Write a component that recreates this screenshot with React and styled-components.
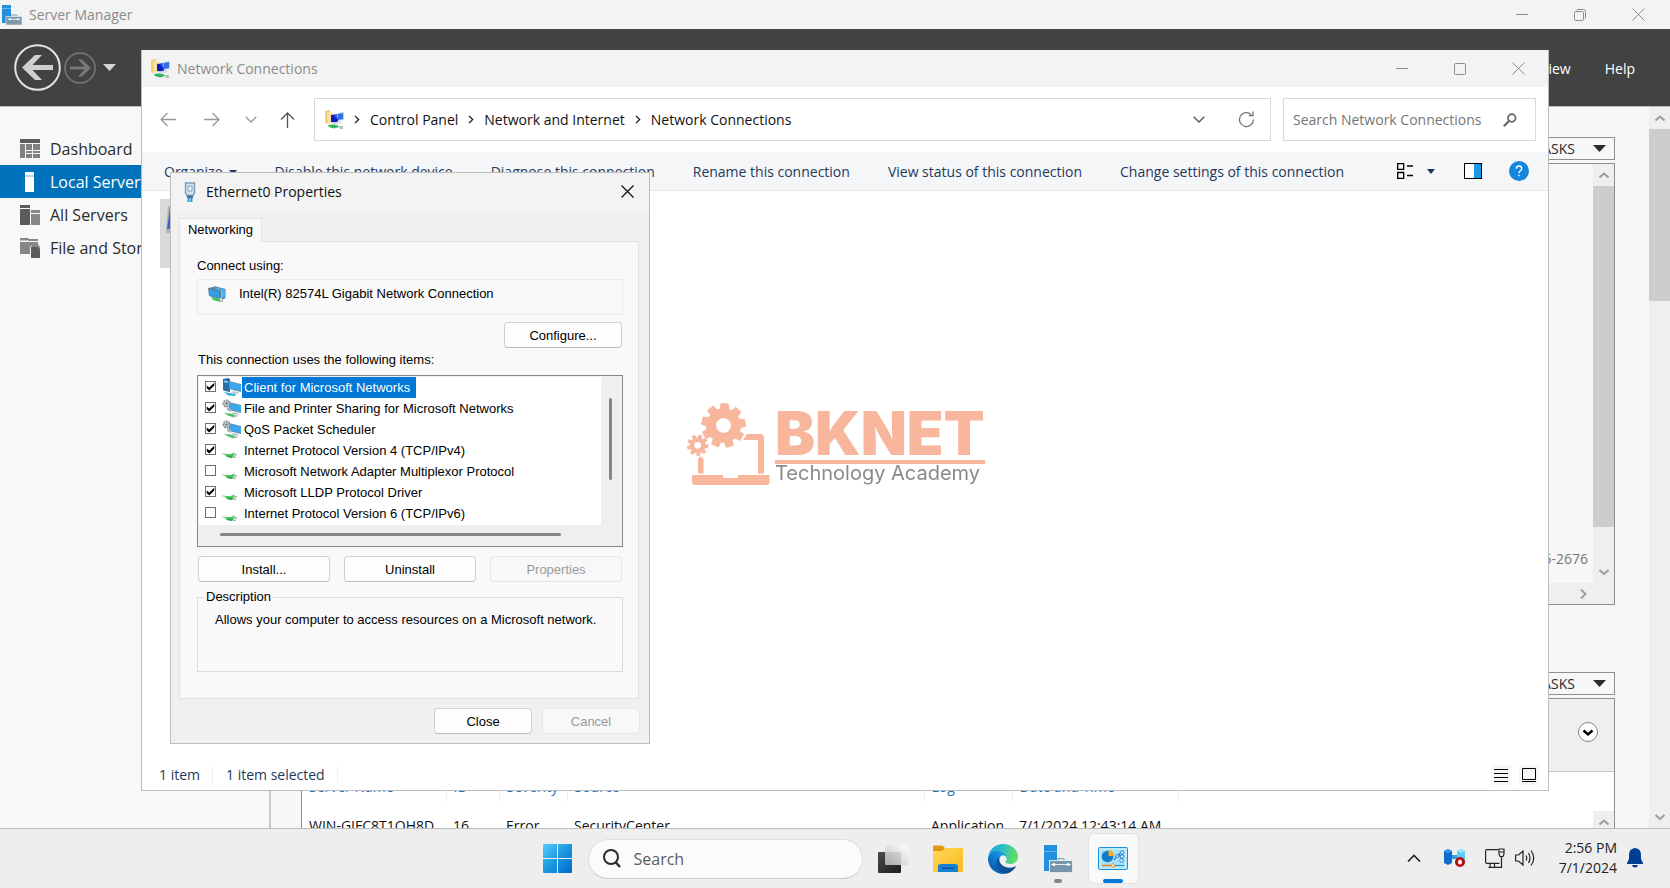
import React from "react";
import styled, { createGlobalStyle } from "styled-components";

const UI = `"Open Sans", "Noto Sans", sans-serif`;
const CLASSIC = `"Liberation Sans", Arial, sans-serif`;

const GlobalStyle = createGlobalStyle`
  *, *::before, *::after { box-sizing: border-box; }
  html, body, #root { height: 100%; }
  body { margin: 0; overflow: hidden; font-family: ${UI}; font-size: 14px; line-height: 20px; color: #111; }
  button, input { font: inherit; color: inherit; margin: 0; }
  button { border: 0; background: none; padding: 0; }
  h1, h2, p, ul { margin: 0; padding: 0; font-weight: 400; font-size: inherit; }
  ul { list-style: none; }
  a { color: inherit; text-decoration: none; }
  svg { display: block; flex: none; }
`;

/* ---------- Shell ---------- */

const Screen = styled.div`
  display: flex;
  flex-direction: column;
  height: 100vh;
  overflow: hidden;
`;

const Desktop = styled.main`
  position: relative;
  flex: 1;
  min-height: 0;
  overflow: hidden;
  display: flex;
  flex-direction: column;
`;

const TitleBar = styled.header`
  display: flex;
  align-items: center;
  flex: none;
  height: ${(p) => p.$height}px;
  padding-left: ${(p) => p.$inset}px;
  gap: ${(p) => p.$gap}px;
  background: #f3f3f3;
  color: ${(p) => (p.$active ? "#111" : "#8c8c8c")};
`;

const Title = styled.h1`
  flex: 1;
  white-space: nowrap;
`;

const CaptionButtons = styled.div`
  display: flex;
  height: 100%;
  padding-right: ${(p) => p.$after || 0}px;
`;

const CaptionButton = styled.button`
  display: flex;
  align-items: center;
  justify-content: center;
  width: ${(p) => p.$width || 58}px;
  height: 100%;
  color: inherit;
`;

/* ---------- Server Manager ---------- */

const ManagerHeader = styled.div`
  display: flex;
  align-items: center;
  flex: none;
  height: 78px;
  padding: 0 35px 0 14px;
  background: #424242;
  border-bottom: 1px solid #b9b9b9;
  color: #fff;
`;

const HistoryButtons = styled.div`
  display: flex;
  align-items: center;
  gap: 3px;
  flex: 1;
`;

const Menu = styled.nav`
  display: flex;
  gap: 34px;
  padding-top: 2px;
`;

const ManagerBody = styled.div`
  display: flex;
  flex: 1;
  min-height: 0;
  background: #f8f8f8;
`;

const Sidebar = styled.nav`
  width: 271px;
  flex: none;
  padding-top: 25px;
  border-right: 2px solid #c8c8c8;
`;

const SideLink = styled.a`
  display: flex;
  align-items: center;
  gap: 10px;
  height: 33px;
  padding-left: 20px;
  font-size: 16px;
  white-space: nowrap;
  background: ${(p) => (p.$selected ? "#0072bc" : "transparent")};
  color: ${(p) => (p.$selected ? "#fff" : "#2b2b2b")};
`;

const Dashboard = styled.div`
  flex: 1;
  min-width: 0;
  overflow: hidden;
  padding: 30px 34px 0 30px;
  background: #f7f7f7;
`;

const TaskRow = styled.div`
  display: flex;
  justify-content: flex-end;
  margin-bottom: 3px;
`;

const TaskButton = styled.button`
  display: flex;
  align-items: center;
  gap: 18px;
  height: 23px;
  padding: 0 8px;
  border: 1px solid #8f8f8f;
  color: #2b2b2b;
`;

const ServerPanel = styled.section`
  display: grid;
  grid-template-columns: 1fr 21px;
  grid-template-rows: 1fr 21px;
  height: 442px;
  margin-bottom: 67px;
  border: 1px solid #8f8f8f;
`;

const ServerFacts = styled.div`
  display: flex;
  align-items: flex-end;
  justify-content: flex-end;
  padding: 0 5px 14px;
  color: #777;
`;

const ScrollBar = styled.div`
  display: flex;
  flex-direction: ${(p) => (p.$horizontal ? "row" : "column")};
  justify-content: ${(p) => (p.$horizontal ? "flex-end" : "flex-start")};
  width: ${(p) => (p.$horizontal ? "auto" : "21px")};
  flex: none;
  background: #efefef;
`;

const ScrollButton = styled.button`
  display: flex;
  align-items: center;
  justify-content: center;
  width: 21px;
  height: 22px;
  flex: none;
  color: #9d9d9d;
`;

const ScrollThumb = styled.div`
  height: ${(p) => p.$length}px;
  background: #cdcdcd;
`;

const Spacer = styled.div`
  flex: 1;
`;

const EventPanel = styled.section`
  border: 1px solid #8f8f8f;
  background: #fff;
`;

const EventHeader = styled.div`
  display: flex;
  align-items: center;
  justify-content: flex-end;
  height: 73px;
  padding-right: 16px;
  padding-bottom: 6px;
  background: #efefef;
  border-bottom: 1px solid #c4c4c4;
`;

const EventBody = styled.div`
  display: flex;
`;

const EventTableBox = styled.div`
  flex: 1;
  min-width: 0;
`;

const EventScroll = styled.div`
  align-self: stretch;
  padding-top: 39px;
`;

const EventScrollTrack = styled.div`
  background: #efefef;
  height: 100%;
`;

const EventTable = styled.table`
  border-collapse: collapse;
  table-layout: fixed;
  width: 876px;
  text-align: left;
  white-space: nowrap;
  th, td { padding: 0 0 0 7px; font-weight: 400; }
  th { height: 29px; color: #1e72b8; border-right: 1px solid #eee; }
  td { height: 50px; color: #111; }
`;

/* ---------- Network Connections ---------- */

const ExplorerWindow = styled.section`
  position: absolute;
  inset: 50px 121px 37px 141px;
  display: flex;
  flex-direction: column;
  background: #fff;
  border: 1px solid #bcbcbc;
  border-top: 0;
`;

const NavRow = styled.div`
  display: flex;
  align-items: center;
  flex: none;
  height: 65px;
  padding-right: 12px;
`;

const NavButton = styled.button`
  display: flex;
  align-items: center;
  justify-content: center;
  width: ${(p) => p.$width}px;
  height: 32px;
  color: ${(p) => (p.$dim ? "#999" : "#555")};
`;

const NavButtons = styled.div`
  display: flex;
  align-items: center;
  width: 172px;
  padding-left: 4px;
  flex: none;
`;

const AddressBar = styled.div`
  display: flex;
  align-items: center;
  flex: 1;
  height: 43px;
  padding-left: 10px;
  border: 1px solid #d9d9d9;
`;

const Crumbs = styled.nav`
  display: flex;
  align-items: center;
  flex: 1;
  padding-left: 9px;
  gap: 10px;
  white-space: nowrap;
`;

const SearchField = styled.label`
  display: flex;
  align-items: center;
  width: 253px;
  height: 43px;
  margin-left: 12px;
  padding: 0 18px 0 9px;
  border: 1px solid #d9d9d9;
`;

const BareInput = styled.input`
  flex: 1;
  min-width: 0;
  border: 0;
  padding: 0;
  background: none;
  outline: none;
  color: #333;
  &::placeholder { color: ${(p) => p.$hint || "#767676"}; opacity: 1; }
`;

const CommandBar = styled.div`
  display: flex;
  align-items: center;
  flex: none;
  height: 39px;
  padding: 0 19px 0 22px;
  background: #f5f6f8;
  border-bottom: 1px solid #e3e6ea;
  color: #1e395b;
`;

const Commands = styled.div`
  display: flex;
  flex: 1;
  gap: 38px;
  padding-top: 2px;
`;

const Command = styled.button`
  display: flex;
  align-items: center;
  gap: 6px;
  white-space: nowrap;
`;

const ViewTools = styled.div`
  display: flex;
  align-items: center;
`;

const ToolButton = styled.button`
  display: flex;
  align-items: center;
  margin-left: ${(p) => p.$before || 0}px;
`;

const FileArea = styled.div`
  flex: 1;
  padding: 8px 0 0 18px;
`;

const ConnectionTile = styled.div`
  display: flex;
  width: 320px;
  height: 69px;
  padding: 6px;
  background: #d9d9d9;
`;

const StatusBar = styled.footer`
  display: flex;
  align-items: center;
  flex: none;
  height: 30px;
  padding: 0 9px 0 17px;
  color: #1e395b;
`;

const StatusItem = styled.span`
  padding-right: 12px;
  margin-right: 13px;
  border-right: 1px solid #eee;
  line-height: 16px;
`;

const StatusTools = styled.div`
  display: flex;
  gap: 8px;
  margin-left: auto;
`;

const StatusButton = styled.button`
  display: flex;
  align-items: center;
  justify-content: center;
  width: 20px;
  height: 20px;
  background: #f6f6f6;
  color: #000;
`;

/* ---------- Ethernet0 Properties ---------- */

const Dialog = styled.section`
  position: absolute;
  top: 172px;
  left: 170px;
  width: 480px;
  background: #f0f0f0;
  border: 1px solid #bdbdbd;
`;

const DialogBody = styled.div`
  padding: 8px 9px 9px 8px;
  font-family: ${CLASSIC};
  font-size: 13px;
  line-height: 16px;
  color: #000;
`;

const Tab = styled.button`
  display: block;
  height: 24px;
  width: 83px;
  margin-bottom: -1px;
  padding-bottom: 2px;
  position: relative;
  background: #f9f9f9;
  border: 1px solid #e2e2e2;
  border-bottom: 0;
`;

const TabPanel = styled.div`
  display: flex;
  flex-direction: column;
  height: 458px;
  margin-right: 1px;
  padding: 16px 15px 0 17px;
  background: #f9f9f9;
  border: 1px solid #e2e2e2;
`;

const AdapterBox = styled.div`
  display: flex;
  gap: 13px;
  height: 36px;
  margin: 5px 0 7px;
  padding: 6px 10px;
  border: 1px solid #ececec;
`;

const ButtonRow = styled.div`
  display: flex;
  justify-content: flex-end;
  gap: 14px;
  padding: 0 1px;
`;

const PushButton = styled.button`
  width: ${(p) => p.$width}px;
  height: 26px;
  padding-top: 1px;
  border: 1px solid #d0d0d0;
  border-bottom-color: #bbb;
  border-radius: 4px;
  background: #fdfdfd;
  &:disabled { color: #9a9a9a; background: #f8f8f8; border-color: #e6e6e6; }
`;

const AboveList = styled.p`
  margin-top: 4px;
  padding-left: 1px;
`;

const ItemList = styled.div`
  display: grid;
  grid-template-columns: 1fr 20px;
  grid-template-rows: 148px 20px;
  height: 172px;
  margin: 7px 0 9px;
  padding: 1px;
  border: 1px solid #828790;
  background: #efefef;
`;

const Items = styled.ul`
  background: #fff;
`;

const Item = styled.li`
  display: flex;
  align-items: center;
  height: 21px;
  padding-left: 6px;
`;

const ItemLabel = styled.label`
  display: flex;
  align-items: center;
  gap: 1px;
  margin-left: 6px;
  height: 21px;
`;

const ItemText = styled.span`
  padding: 3px 6px 2px 2px;
  background: ${(p) => (p.$selected ? "#0078d7" : "transparent")};
  color: ${(p) => (p.$selected ? "#fff" : "#000")};
`;

const Check = styled.input`
  appearance: none;
  width: 11px;
  height: 11px;
  margin: 0 0 2px;
  border: 1px solid #6e6e6e;
  background: #fff;
  &:checked::after {
    content: "";
    display: block;
    width: 9px;
    height: 9px;
    background: #000;
    clip-path: polygon(8% 38%, 36% 62%, 92% 8%, 92% 40%, 36% 94%, 8% 70%);
  }
`;

const VerticalTrack = styled.div`
  padding: 21px 0 0 8px;
`;

const HorizontalTrack = styled.div`
  grid-column: 1 / -1;
  padding: 8px 60px 0 21px;
`;

const SlimThumb = styled.div`
  border-radius: 2px;
  background: #868686;
  width: ${(p) => (p.$vertical ? "3px" : "auto")};
  height: ${(p) => (p.$vertical ? "82px" : "3px")};
`;

const Description = styled.fieldset`
  height: 83px;
  margin: 7px 0 0;
  padding: 7px 0 0 17px;
  border: 1px solid #dcdcdc;
  white-space: nowrap;
  legend { margin-left: -11px; padding: 0 2px; }
`;

const DialogActions = styled.div`
  display: flex;
  justify-content: flex-end;
  gap: 10px;
  margin-top: 9px;
`;

/* ---------- Watermark ---------- */

const Watermark = styled.div`
  position: fixed;
  inset: 0;
  display: flex;
  align-items: center;
  justify-content: center;
  gap: 4px;
  padding-left: 2px;
  pointer-events: none;
`;

const WatermarkText = styled.div`
  width: 210px;
  white-space: nowrap;
  font-family: Inter, sans-serif;
`;

const BrandName = styled.div`
  height: 62px;
  padding-top: 4px;
  border-bottom: 4px solid #f8b69d;
  color: #f8b69d;
  font-size: 60px;
  font-weight: 900;
  line-height: 54px;
`;

const BrandLine = styled.div`
  height: 22px;
  color: #8a8a8a;
  font-size: 20px;
  line-height: 18px;
`;

/* ---------- Taskbar ---------- */

const Taskbar = styled.footer`
  display: grid;
  grid-template-columns: 1fr auto 1fr;
  align-items: center;
  flex: none;
  height: 60px;
  background: #eee;
  border-top: 1px solid #bdbdbd;
`;

const AppGroup = styled.div`
  grid-column: 2;
  display: flex;
  align-items: center;
  gap: 6px;
`;

const AppButton = styled.button`
  position: relative;
  display: flex;
  align-items: center;
  justify-content: center;
  width: 49px;
  height: 49px;
  border-radius: 5px;
  background: ${(p) => (p.$active ? "#f9f9f9" : "transparent")};
  box-shadow: ${(p) => (p.$active ? "0 0 0 1px #e2e2e2" : "none")};
  &::after {
    content: "";
    position: absolute;
    bottom: 0;
    display: ${(p) => (p.$running ? "block" : "none")};
    width: ${(p) => (p.$active ? 20 : 8)}px;
    height: 4px;
    border-radius: 2px;
    background: ${(p) => (p.$active ? "#0078d7" : "#868686")};
  }
`;

const TaskSearch = styled.label`
  display: flex;
  align-items: center;
  gap: 13px;
  width: 275px;
  height: 40px;
  padding: 0 14px;
  border: 1px solid #dedede;
  border-bottom-color: #ccc;
  border-radius: 20px;
  background: #fbfbfb;
  font-size: 16px;
`;

const Tray = styled.div`
  display: flex;
  align-items: center;
  justify-content: flex-end;
  padding: 0 27px 2px 0;
  color: #222;
`;

const TrayButton = styled.button`
  display: flex;
  margin-right: ${(p) => p.$after}px;
`;

const Clock = styled.time`
  width: 62px;
  margin-right: 10px;
  text-align: right;
`;

/* ---------- Icons ---------- */

const Line = ({ w, h, d, sw = 1 }) => (
  <svg width={w} height={h} viewBox={`0 0 ${w} ${h}`} fill="none" stroke="currentColor" strokeWidth={sw} aria-hidden="true">
    <path d={d} />
  </svg>
);

const Minimize = () => <Line w={12} h={12} d="M0 5.5H12" />;
const Maximize = () => (
  <svg width="12" height="12" fill="none" stroke="currentColor"><rect x=".5" y=".5" width="11" height="11" rx="1" /></svg>
);
const Restore = () => (
  <svg width="12" height="12" fill="none" stroke="currentColor">
    <rect x=".5" y="2.5" width="9" height="9" rx="1" />
    <path d="M2.5 1.5Q3 .5 4 .5H9.5Q11.5 .5 11.5 2.5V8Q11.5 9 10.5 9.5" />
  </svg>
);
const Cross = ({ sw }) => <Line w={13} h={13} d="M.5 .5L12.5 12.5M12.5 .5L.5 12.5" sw={sw} />;
const ChevDown = ({ sw = 1.3 }) => <Line w={12} h={7} d="M.7 .7L6 6L11.3 .7" sw={sw} />;
const CrumbArrow = () => <Line w={6} h={9} d="M1 .8L4.700 4.500L1 8.200" sw={1.2} />;
const ScrollChev = ({ d }) => <Line w={10} h={10} d={d} sw={2} />;
const UP = "M.5 7.5L5 3.500L9.500 7.500";
const DOWN = "M.5 3L5 7L9.500 3";
const RIGHT = "M3 .5L7.500 5L3 9.500";
const Triangle = ({ w = 8, h = 5, fill = "currentColor" }) => (
  <svg width={w} height={h} fill={fill}><path d={`M0 0H${w}L${w / 2} ${h}Z`} /></svg>
);

const ServerIcon = ({ size = 20, box = "#7b98ad" }) => (
  <svg width={size} height={size} viewBox="0 0 20 20">
    <path d="M0 0H9V18H0Z" fill="#2290dc" />
    <path d="M0 3.5H9" stroke="#7cc0ec" strokeWidth=".8" />
    <path d="M9 10.8Q9 10 10 10H14Q15 10 15 10.8V12" fill="none" stroke={box} />
    <rect x="4" y="11.5" width="16" height="8.500" fill={box} stroke="#eee" strokeWidth=".6" />
    <path d="M6 14.3H18" stroke="#e9f1f6" />
    <circle cx="8" cy="14.3" r="1" fill="#fff" /><circle cx="16" cy="14.3" r="1" fill="#fff" />
  </svg>
);

const DashboardIcon = () => (
  <svg width="20" height="19"><path fill="#5b5b5b" d="M0 0H20V4H0Z" /><path fill="#808080" d="M0 5H5V19H0ZM6 5H12V11H6ZM13 5H20V11H13ZM6 12H12V14H6ZM13 12H20V14H13ZM6 15H12V19H6ZM13 15H20V19H13Z" /></svg>
);
const LocalIcon = () => (
  <svg width="20" height="20"><path fill="#fff" d="M5 0H14V3H5ZM5 5H14V20H5Z" /><path fill="#b5d7ee" d="M5 3H14V5H5Z" /></svg>
);
const ServersIcon = () => (
  <svg width="20" height="20"><path fill="#5b5b5b" d="M0 0H10V3H0ZM0 4H10V20H0Z" /><path fill="#868686" d="M11 5H20V8H11ZM11 9H20V20H11Z" /></svg>
);
const StorageIcon = () => (
  <svg width="20" height="20"><path fill="#868686" d="M0 0H8L9 1H18V3H9L8 2.500H0ZM0 4H18V7H13Q10 7 10 11V16H0Z" /><path fill="#5b5b5b" d="M12 9H16V8Q20 8 20 12L18 11H20V20H11V9Z" /><path fill="#868686" d="M11 9Q12 6 16 6Q20 6 20 11Q18 9 15 9Z" /></svg>
);

const BackCircle = () => (
  <svg width="47" height="47" viewBox="0 0 47 47">
    <circle cx="23.5" cy="23.5" r="22.3" fill="none" stroke="#e4e4e4" strokeWidth="2" />
    <path d="M8 23.5L21 11H28L18.5 21H39V26H18.5L28 36H21Z" fill="#cfcfcf" />
  </svg>
);
const ForwardCircle = () => (
  <svg width="32" height="32" viewBox="0 0 32 32">
    <circle cx="16" cy="16" r="15" fill="none" stroke="#6e6e6e" strokeWidth="2" />
    <path d="M27 16L18 7.5H14L20.5 14.5H6V17.5H20.5L14 24.5H18Z" fill="#777" />
  </svg>
);

const NetFolderIcon = () => (
  <svg width="20" height="20" viewBox="0 0 20 20">
    <path d="M0 1L5 0V12L2 14L0 12Z" fill="#f2cf6a" />
    <path d="M2 2L8 3V12L3 14Z" fill="#fae3a0" />
    <path d="M6 5L13 4V13L6 12Z" fill="#0b1fc2" /><path d="M9 6L13 4V9Z" fill="#3b62f0" />
    <path d="M12 3L19 2V10L13 11Z" fill="#b4d9f2" /><path d="M13 4L18 3V9L13 10Z" fill="#2f6fe0" />
    <path d="M7 13L15 11L17 13L9 15Z" fill="#d3dde6" />
    <path d="M3 15L8 14.5L13 15.500L14 17L9 18.500L4 17Z" fill="#2fb457" /><path d="M13 16H18V19H15Z" fill="#b5c0b8" />
  </svg>
);

const EthernetIcon = () => (
  <svg width="12" height="20" viewBox="0 0 12 20">
    <path d="M1.5 1H10.5V11L9 13.5H3L1.5 11Z" fill="#d2e4f1" stroke="#7e9db5" strokeWidth="1.4" />
    <path d="M4 4H8V9H4Z" fill="#f3f9fd" stroke="#7e9db5" />
    <path d="M3 13.5H9V16H3Z" fill="#50748f" /><path d="M3.5 16H8.5V20H3.500Z" fill="#2ba0e0" /><path d="M5.5 16H6.500V20H5.500Z" fill="#b9e2f7" />
  </svg>
);

const AdapterIcon = () => (
  <svg width="18" height="17" viewBox="0 0 18 17">
    <path d="M0 2L5 1L13 3V12L11 13L1 10Z" fill="#647f91" />
    <path d="M1 3L11 5.500V12L1 9.500Z" fill="#2f9fe8" />
    <path d="M6 0L17.500 3V12L15 13.500L13.500 13V5L6 3Z" fill="#5c7d93" /><path d="M7 1L17 3.700V11.500L14 12V5L7 3Z" fill="#45b2f2" />
    <path d="M3 11L9 12L13 14L12 16L5 14Z" fill="#45c262" /><path d="M12 14H15V16H12Z" fill="#b7c2bb" />
  </svg>
);

const Monitor = () => (
  <>
    <path d="M7 3L19 6V14L7 11Z" fill="#6e8898" /><path d="M8 4L19 6.8V13L8 10.500Z" fill="#3ba8ee" />
    <path d="M11 13L16 14L17 16L9 14.500Z" fill="#b8c8d2" />
  </>
);
const ClientIcon = () => (
  <svg width="19" height="19" viewBox="0 0 19 19">
    <path d="M1 1L6 0L8 1V14L3 13L1 12Z" fill="#286fa3" /><path d="M2 2.5L6 3V5L2 4.500Z" fill="#7cc4ee" />
    <Monitor />
    <path d="M2 14L8 15L14 16L13 18L6 17.500Z" fill="#37afd2" />
  </svg>
);
const ServiceIcon = () => (
  <svg width="19" height="19" viewBox="0 0 19 19">
    <Monitor />
    <circle cx="4.5" cy="4.500" r="3" fill="#e4e7e9" stroke="#8b959b" strokeWidth="2" strokeDasharray="2 .6" />
    <circle cx="4.5" cy="4.500" r="1.300" fill="#6f777c" /><path d="M5 8L9 10V13L5 11Z" fill="#aab4ba" />
    <path d="M2 14L8 14.5L14 16L12 18.500L6 16.500Z" fill="#44c366" /><path d="M12 16H15V18H12Z" fill="#b2bdb5" />
  </svg>
);
const ProtocolIcon = () => (
  <svg width="19" height="19" viewBox="0 0 19 19">
    <path d="M0 12L4 12.5L3 14L0 13.500Z" fill="#cfd6d0" />
    <path d="M2 13L9 13L12 11.5L13 13L10 17L5 16Z" fill="#4fce66" /><path d="M5 14.5L11 14.500L10 17L5 16Z" fill="#2da94b" />
    <path d="M11 13H15V14.5H11ZM11 15.500H14V17H11Z" fill="#aab3ac" />
  </svg>
);
const ConnectionIcon = () => (
  <svg width="48" height="30"><path d="M2 1L30 0V28H0Z" fill="#a8b4bf" /><path d="M4 3H30V22L1 24Z" fill="#2f63d4" /></svg>
);

const ViewIcon = () => (
  <svg width="16" height="16" fill="none" stroke="#000" strokeWidth="1.3"><path d="M.7 .7H6.700V6.300H.7ZM.7 9.500H6.700V15.300H.7ZM10 3H16M10 12.500H16" /></svg>
);
const PaneIcon = () => (
  <svg width="18" height="16"><rect x=".5" y=".5" width="17" height="15" fill="#fff" stroke="#000" /><path d="M10 1H17V15H10Z" fill="#1a9ae6" /></svg>
);
const HelpIcon = () => (
  <svg width="20" height="20"><circle cx="10" cy="10" r="10" fill="#1486dc" /><path d="M7.3 7.700Q7.300 5 10 5Q12.700 5 12.700 7.500Q12.700 9 11.200 10Q10 10.800 10 12.300M10 13.700V15.300" fill="none" stroke="#fff" strokeWidth="1.400" /></svg>
);
const RefreshIcon = () => (
  <svg width="17" height="17" viewBox="0 0 17 17" fill="none" stroke="#777" strokeWidth="1.3"><path d="M15.5 8.500A7 7 0 1 1 13 3.200M15 .5V4.500H10.800" /></svg>
);
const FindIcon = () => (
  <svg width="14" height="14" viewBox="0 0 14 14" fill="none" stroke="#666"><circle cx="8.8" cy="5" r="3.800" strokeWidth="1.700" /><path d="M6.2 7.800L.8 13.200" strokeWidth="2.200" /></svg>
);
const DetailsIcon = () => <Line w={14} h={14} d="M0 1.5H14M0 5.5H14M0 9.5H14M0 13.500H14" />;
const LargeIcon = () => <Line w={14} h={14} d="M.5 .5H13.5V11.5H.5ZM0 13.5H14" />;

const ExpandIcon = () => (
  <svg width="20" height="20"><circle cx="10" cy="10" r="9.5" fill="#fff" stroke="#888" /><path d="M5.5 8.500L10 12.500L14.500 8.500" fill="none" stroke="#000" strokeWidth="2.400" /></svg>
);

const StartIcon = () => (
  <svg width="29" height="29"><defs><linearGradient id="win" x1="0" y1="0" x2="29" y2="29" gradientUnits="userSpaceOnUse"><stop stopColor="#55cdfb" /><stop offset=".5" stopColor="#1b97e0" /><stop offset="1" stopColor="#0068cf" /></linearGradient></defs>
    <path fill="url(#win)" d="M1 0H14V14H0V1Q0 0 1 0ZM15 0H28Q29 0 29 1V14H15ZM0 15H14V29H1Q0 29 0 28ZM15 15H29V28Q29 29 28 29H15Z" /></svg>
);
const LensIcon = () => (
  <svg width="18" height="19" fill="none" stroke="#2b2b2b"><circle cx="8" cy="8" r="7" strokeWidth="2" /><path d="M12.5 13L17 18" strokeWidth="2.500" /></svg>
);
const TaskViewIcon = () => (
  <svg width="30" height="28"><defs><linearGradient id="tv" x1="0" y1="0" x2="1" y2="1"><stop stopColor="#4a4a4a" /><stop offset="1" stopColor="#1d1d1d" /></linearGradient><linearGradient id="tw" x1="0" y1="1" x2="1" y2="0"><stop stopColor="#bdbdbd" /><stop offset="1" stopColor="#fff" /></linearGradient></defs>
    <rect y="7" width="23" height="21" rx="1" fill="url(#tv)" /><rect x="7" y="0" width="23" height="20" rx="1" fill="url(#tw)" fillOpacity=".88" /></svg>
);
const FolderIcon = () => (
  <svg width="30" height="28"><defs><linearGradient id="fo" x1="0" y1="0" x2="1" y2="1"><stop stopColor="#ffd75b" /><stop offset="1" stopColor="#f9b91f" /></linearGradient></defs>
    <path d="M0 1.5Q0 .5 1 .5H9Q10 .5 11 2L12 3V9H0Z" fill="#e29a0d" /><path d="M0 6H9L12 3H29Q30 3 30 4V26Q30 27 29 27H1Q0 27 0 26Z" fill="url(#fo)" />
    <path d="M5 27V22Q5 19 8 19H22Q25 19 25 22V27Z" fill="#1680d2" /><path d="M9 22.5H21V24H9Z" fill="#0b549b" /></svg>
);
const EdgeIcon = () => (
  <svg width="30" height="30" viewBox="0 0 256 256"><defs>
    <linearGradient id="e1" x1="63" y1="178" x2="241" y2="178" gradientUnits="userSpaceOnUse"><stop stopColor="#0c59a4" /><stop offset="1" stopColor="#114a8b" /></linearGradient>
    <linearGradient id="e2" x1="157" y1="99" x2="46" y2="221" gradientUnits="userSpaceOnUse"><stop stopColor="#1b9de2" /><stop offset=".5" stopColor="#0e7fd0" /><stop offset="1" stopColor="#0560b5" /></linearGradient>
    <linearGradient id="e3" x1="20" y1="60" x2="255" y2="120" gradientUnits="userSpaceOnUse"><stop stopColor="#1ca5da" /><stop offset=".45" stopColor="#2fc2c0" /><stop offset="1" stopColor="#66e055" /></linearGradient></defs>
    <g transform="translate(-4.6 -4.9)">
      <path fill="url(#e1)" d="M235.68 195.46a93.73 93.73 0 0 1-10.54 4.71 101.87 101.87 0 0 1-35.9 6.46c-47.32 0-88.54-32.55-88.54-74.32A31.48 31.48 0 0 1 117.13 105c-42.8 1.8-53.8 46.4-53.8 72.53 0 73.88 68.09 81.37 82.76 81.37 7.91 0 19.84-2.3 27-4.56l1.31-.44a128.34 128.34 0 0 0 66.6-52.8 4 4 0 0 0-5.32-5.64Z" />
      <path fill="url(#e2)" d="M110.34 246.34A79.2 79.2 0 0 1 87.6 225a80.72 80.72 0 0 1 29.53-120c3.12-1.47 8.45-4.13 15.54-4a32.35 32.35 0 0 1 25.69 13 31.88 31.88 0 0 1 6.36 18.66c0-.21 24.46-79.6-80-79.6-43.9 0-80 41.66-80 78.21a130.15 130.15 0 0 0 12.11 56 128 128 0 0 0 156.38 67.11 75.55 75.55 0 0 1-62.78-8Z" />
      <path fill="url(#e3)" d="M156.94 153.78c-.81 1.05-3.3 2.5-3.3 5.66 0 2.61 1.7 5.12 4.72 7.23 14.38 10 41.49 8.68 41.56 8.68a59.56 59.56 0 0 0 30.27-8.35 61.38 61.38 0 0 0 30.43-52.88c.26-22.41-8-37.31-11.34-43.91C228.09 28.76 182.35 4.7 132.61 4.7a128 128 0 0 0-128 126.2c.48-36.54 36.8-66.05 80-66.05 3.5 0 23.46.34 42 10.07 16.34 8.58 24.9 18.94 30.85 29.21 6.18 10.67 7.28 24.15 7.28 29.52s-2.74 13.33-7.8 20.13Z" />
    </g></svg>
);
const ManagerAppIcon = () => (
  <svg width="29" height="28"><path d="M0 0H13V26H0Z" fill="#2290dc" /><path d="M0 6.5H13" stroke="#5fb2ea" />
    <path d="M14 16V14.5Q14 13.500 15 13.500H19Q20 13.500 20 14.500V16" fill="none" stroke="#7b9aaf" strokeWidth="1.200" />
    <rect x="5.5" y="15.500" width="23" height="12" fill="#7495aa" stroke="#dfe7ec" /><path d="M7 19.500H27" stroke="#e6eef3" /><circle cx="10" cy="19.500" r="1.500" fill="#fff" /><circle cx="24" cy="19.500" r="1.500" fill="#fff" /></svg>
);
const ControlPanelIcon = () => (
  <svg width="30" height="24"><rect x=".5" y=".5" width="29" height="22" rx="1" fill="#a4e2fb" stroke="#1b8fd8" /><path d="M2 2H28V21H2Z" fill="none" stroke="#d5f3fe" />
    <circle cx="9.5" cy="9.500" r="5.800" fill="#137ac9" /><path d="M10.500 3V9H16.500A6 6 0 0 0 10.500 3Z" fill="#f7a928" />
    <path d="M16 13L20 8L24 10M20 8L24 5" stroke="#1677bf" fill="none" strokeWidth="1.200" /><g fill="#fff" stroke="#1677bf"><circle cx="19.500" cy="9" r="1.500" /><circle cx="24" cy="5.500" r="1.700" /><circle cx="24" cy="9.500" r="1.700" /><circle cx="23.500" cy="13.500" r="1.700" /></g>
    <path d="M4 18.500H26" stroke="#1b8fd8" /><path d="M4 18.500H15" stroke="#e58a1c" strokeWidth="1.500" /><circle cx="15" cy="18.500" r="1.700" fill="#fff" stroke="#e58a1c" /></svg>
);
const ServicesTrayIcon = () => (
  <svg width="22" height="18"><path d="M0 2L4 0L8 2V14L4 16L0 14Z" fill="#0f6ccb" /><path d="M0 2L4 0L8 2L4 4Z" fill="#3c99ea" /><path d="M13 2L17 0L21 2V14L17 16L13 14Z" fill="#59cff6" /><path d="M13 2L17 0L21 2L17 4Z" fill="#9be8fd" />
    <path d="M8 6H13V10H8Z" fill="#329fe6" /><circle cx="16" cy="13" r="5" fill="#b30f14" /><ellipse cx="16" cy="13" rx="2" ry="2.600" fill="#fff" /></svg>
);
const NetworkTrayIcon = () => (
  <svg width="20" height="20" fill="none" stroke="#222" strokeWidth="1.2"><path d="M13 1.600H2Q.6 1.600 .6 3V14Q.6 15.400 2 15.400H14.500M5 15.400V19M9.500 15.400V19M3.500 19.300H16.500V9M14 1H19V6L18 8.500H15L14 6ZM14 4H19" /></svg>
);
const SoundIcon = () => (
  <svg width="20" height="18" viewBox="0 0 20 18" fill="none" stroke="#222" strokeWidth="1.2"><path d="M.6 6V12H3.500L8 16V2L3.500 6ZM11 6.500Q12.500 9 11 11.500M13.500 4Q16.500 9 13.500 14M16 1.500Q21.500 9 16 16.500" /></svg>
);
const BellIcon = () => (
  <svg width="16" height="20"><path d="M8 0Q14 .5 14 7V11L16 15V16H0V15L2 11V7Q2 .5 8 0Z" fill="#003e92" /><path d="M5 17H11Q10.500 19.500 8 19.500Q5.500 19.500 5 17Z" fill="#003e92" /></svg>
);

const gearPath = (cx, cy, outer, inner, hole, teeth, turn) => {
  const step = (Math.PI * 2) / teeth;
  const at = (r, a) => `${(cx + r * Math.cos(a)).toFixed(2)} ${(cy + r * Math.sin(a)).toFixed(2)}`;
  const points = [];
  for (let i = 0; i < teeth; i += 1) {
    const a = turn + i * step;
    points.push(at(inner, a - step * 0.34), at(outer, a - step * 0.24), at(outer, a + step * 0.24), at(inner, a + step * 0.34));
  }
  return `M${points.join("L")}ZM${cx - hole} ${cy}a${hole} ${hole} 0 1 0 ${hole * 2} 0a${hole} ${hole} 0 1 0 ${-hole * 2} 0Z`;
};
const BrandMark = () => (
  <svg width="84" height="84" viewBox="17 12 84 84" fill="#f8b69d" fillRule="evenodd">
    <path d={gearPath(53.5, 35.5, 22, 17, 7.8, 9, -0.12)} stroke="#f8b69d" strokeLinejoin="round" />
    <path d={gearPath(27.7, 55.3, 10.8, 8, 3.4, 9, 0.1)} />
    <path d="M73 50L77 44H90Q94 44 94 48V83.5H88V50ZM28 69L30.5 66L33.5 69V83.5H28ZM22 85H53V88H68V85H99.5V92Q99.5 95 96.5 95H25Q22 95 22 92Z" />
  </svg>
);

/* ---------- Data ---------- */

const PLACES = [
  ["Dashboard", DashboardIcon],
  ["Local Server", LocalIcon],
  ["All Servers", ServersIcon],
  ["File and Storage Services", StorageIcon],
];

const COMMANDS = [
  "Disable this network device",
  "Diagnose this connection",
  "Rename this connection",
  "View status of this connection",
  "Change settings of this connection",
];

const ITEMS = [
  ["Client for Microsoft Networks", true, ClientIcon],
  ["File and Printer Sharing for Microsoft Networks", true, ServiceIcon],
  ["QoS Packet Scheduler", true, ServiceIcon],
  ["Internet Protocol Version 4 (TCP/IPv4)", true, ProtocolIcon],
  ["Microsoft Network Adapter Multiplexor Protocol", false, ProtocolIcon],
  ["Microsoft LLDP Protocol Driver", true, ProtocolIcon],
  ["Internet Protocol Version 6 (TCP/IPv6)", false, ProtocolIcon],
];

const COLUMNS = [["Server Name", 144], ["ID", 53], ["Severity", 68], ["Source", 357], ["Log", 88], ["Date and Time", 166]];
const EVENT = ["WIN-GIFC8T1OH8D", "16", "Error", "SecurityCenter", "Application", "7/1/2024 12:43:14 AM"];

/* ---------- Parts ---------- */

function Tasks() {
  return (
    <TaskRow>
      <TaskButton>TASKS<Triangle w={13} h={7} /></TaskButton>
    </TaskRow>
  );
}

function ServerManager() {
  return (
    <>
      <TitleBar $height={29} $inset={2} $gap={7}>
        <ServerIcon />
        <Title>Server Manager</Title>
        <CaptionButtons $after={3}>
          <CaptionButton aria-label="Minimize"><Minimize /></CaptionButton>
          <CaptionButton aria-label="Restore"><Restore /></CaptionButton>
          <CaptionButton aria-label="Close"><Cross /></CaptionButton>
        </CaptionButtons>
      </TitleBar>
      <ManagerHeader>
        <HistoryButtons>
          <button aria-label="Back"><BackCircle /></button>
          <button aria-label="Forward"><ForwardCircle /></button>
          <CaptionButton $width={21} aria-label="History"><Triangle w={13} h={7} fill="#d6d6d6" /></CaptionButton>
        </HistoryButtons>
        <Menu>
          <button>View</button>
          <button>Help</button>
        </Menu>
      </ManagerHeader>
      <ManagerBody>
        <Sidebar>
          {PLACES.map(([name, Icon]) => (
            <SideLink key={name} href="#" $selected={name === "Local Server"}><Icon />{name}</SideLink>
          ))}
        </Sidebar>
        <Dashboard>
          <Tasks />
          <ServerPanel>
            <ServerFacts>5-2676</ServerFacts>
            <ScrollBar>
              <ScrollButton aria-label="Scroll up"><ScrollChev d={UP} /></ScrollButton>
              <ScrollThumb $length={341} />
              <Spacer />
              <ScrollButton aria-label="Scroll down"><ScrollChev d={DOWN} /></ScrollButton>
            </ScrollBar>
            <ScrollBar $horizontal>
              <ScrollButton aria-label="Scroll right"><ScrollChev d={RIGHT} /></ScrollButton>
            </ScrollBar>
            <ScrollBar />
          </ServerPanel>
          <Tasks />
          <EventPanel>
            <EventHeader><button aria-label="Expand"><ExpandIcon /></button></EventHeader>
            <EventBody>
              <EventTableBox>
                <EventTable>
                  <colgroup>{COLUMNS.map(([name, width]) => <col key={name} width={width} />)}</colgroup>
                  <thead><tr>{COLUMNS.map(([name]) => <th key={name}>{name}</th>)}</tr></thead>
                  <tbody><tr>{EVENT.map((value) => <td key={value}>{value}</td>)}</tr></tbody>
                </EventTable>
              </EventTableBox>
              <EventScroll>
                <EventScrollTrack>
                  <ScrollButton aria-label="Scroll up"><ScrollChev d={UP} /></ScrollButton>
                </EventScrollTrack>
              </EventScroll>
            </EventBody>
          </EventPanel>
        </Dashboard>
        <ScrollBar>
          <ScrollButton aria-label="Scroll up"><ScrollChev d={UP} /></ScrollButton>
          <ScrollThumb $length={172} />
          <Spacer />
          <ScrollButton aria-label="Scroll down"><ScrollChev d={DOWN} /></ScrollButton>
        </ScrollBar>
      </ManagerBody>
    </>
  );
}

function NetworkConnections() {
  return (
    <ExplorerWindow>
      <TitleBar $height={37} $inset={9} $gap={6}>
        <NetFolderIcon />
        <Title>Network Connections</Title>
        <CaptionButtons $after={1}>
          <CaptionButton aria-label="Minimize"><Minimize /></CaptionButton>
          <CaptionButton aria-label="Maximize"><Maximize /></CaptionButton>
          <CaptionButton aria-label="Close"><Cross /></CaptionButton>
        </CaptionButtons>
      </TitleBar>
      <NavRow>
        <NavButtons>
          <NavButton $width={44} $dim aria-label="Back"><Line w={16} h={15} d="M16 7.5H1M7.5 1L1 7.500L7.500 14" sw={1.3} /></NavButton>
          <NavButton $width={44} $dim aria-label="Forward"><Line w={16} h={15} d="M0 7.5H15M8.5 1L15 7.500L8.500 14" sw={1.3} /></NavButton>
          <NavButton $width={34} $dim aria-label="Recent locations"><ChevDown /></NavButton>
          <NavButton $width={38} aria-label="Up"><Line w={15} h={16} d="M7.5 16V1M1 7.500L7.500 1L14 7.500" sw={1.3} /></NavButton>
        </NavButtons>
        <AddressBar>
          <NetFolderIcon />
          <Crumbs>
            <CrumbArrow />
            <a href="#">Control Panel</a>
            <CrumbArrow />
            <a href="#">Network and Internet</a>
            <CrumbArrow />
            <a href="#">Network Connections</a>
          </Crumbs>
          <NavButton $width={47} aria-label="Previous locations"><ChevDown /></NavButton>
          <NavButton $width={48} aria-label="Refresh"><RefreshIcon /></NavButton>
        </AddressBar>
        <SearchField>
          <BareInput aria-label="Search Network Connections" placeholder="Search Network Connections" />
          <FindIcon />
        </SearchField>
      </NavRow>
      <CommandBar>
        <Commands>
          <Command>Organize<Triangle /></Command>
          {COMMANDS.map((text) => <Command key={text}>{text}</Command>)}
        </Commands>
        <ViewTools>
          <ToolButton aria-label="Change view"><ViewIcon /></ToolButton>
          <ToolButton aria-label="More views" $before={14}><Triangle /></ToolButton>
          <ToolButton aria-label="Preview pane" $before={29}><PaneIcon /></ToolButton>
          <ToolButton aria-label="Help" $before={27}><HelpIcon /></ToolButton>
        </ViewTools>
      </CommandBar>
      <FileArea>
        <ConnectionTile><ConnectionIcon /></ConnectionTile>
      </FileArea>
      <StatusBar>
        <StatusItem>1 item</StatusItem>
        <StatusItem>1 item selected</StatusItem>
        <StatusTools>
          <StatusButton aria-label="Details"><DetailsIcon /></StatusButton>
          <StatusButton aria-label="Large icons"><LargeIcon /></StatusButton>
        </StatusTools>
      </StatusBar>
    </ExplorerWindow>
  );
}

function EthernetProperties() {
  return (
    <Dialog role="dialog" aria-label="Ethernet0 Properties">
      <TitleBar $height={37} $inset={13} $gap={10} $active>
        <EthernetIcon />
        <Title>Ethernet0 Properties</Title>
        <CaptionButton $width={43} aria-label="Close"><Cross sw={1.3} /></CaptionButton>
      </TitleBar>
      <DialogBody>
        <Tab>Networking</Tab>
        <TabPanel>
          <p>Connect using:</p>
          <AdapterBox><AdapterIcon />Intel(R) 82574L Gigabit Network Connection</AdapterBox>
          <ButtonRow><PushButton $width={118}>Configure...</PushButton></ButtonRow>
          <AboveList>This connection uses the following items:</AboveList>
          <ItemList>
            <Items>
              {ITEMS.map(([name, on, Icon], i) => (
                <Item key={name}>
                  <Check type="checkbox" id={`item-${i}`} defaultChecked={on} />
                  <ItemLabel htmlFor={`item-${i}`}><Icon /><ItemText $selected={i === 0}>{name}</ItemText></ItemLabel>
                </Item>
              ))}
            </Items>
            <VerticalTrack><SlimThumb $vertical /></VerticalTrack>
            <HorizontalTrack><SlimThumb /></HorizontalTrack>
          </ItemList>
          <ButtonRow>
            <PushButton $width={132}>Install...</PushButton>
            <PushButton $width={132}>Uninstall</PushButton>
            <PushButton $width={132} disabled>Properties</PushButton>
          </ButtonRow>
          <Description>
            <legend>Description</legend>
            <p>Allows your computer to access resources on a Microsoft network.</p>
          </Description>
        </TabPanel>
        <DialogActions>
          <PushButton $width={98}>Close</PushButton>
          <PushButton $width={98} disabled>Cancel</PushButton>
        </DialogActions>
      </DialogBody>
    </Dialog>
  );
}

function WindowsTaskbar() {
  return (
    <Taskbar>
      <AppGroup>
        <AppButton aria-label="Start"><StartIcon /></AppButton>
        <TaskSearch><LensIcon /><BareInput aria-label="Search" placeholder="Search" $hint="#5c5c5c" /></TaskSearch>
        <AppButton aria-label="Task view"><TaskViewIcon /></AppButton>
        <AppButton aria-label="File Explorer"><FolderIcon /></AppButton>
        <AppButton aria-label="Microsoft Edge"><EdgeIcon /></AppButton>
        <AppButton aria-label="Server Manager" $running><ManagerAppIcon /></AppButton>
        <AppButton aria-label="Control Panel" $running $active><ControlPanelIcon /></AppButton>
      </AppGroup>
      <Tray>
        <TrayButton aria-label="Show hidden icons" $after={23}><Line w={14} h={8} d="M1 7.5L7 1.5L13 7.5" sw={1.6} /></TrayButton>
        <TrayButton aria-label="Services" $after={19}><ServicesTrayIcon /></TrayButton>
        <TrayButton aria-label="Network" $after={10}><NetworkTrayIcon /></TrayButton>
        <TrayButton aria-label="Volume" $after={20}><SoundIcon /></TrayButton>
        <Clock>2:56 PM<br />7/1/2024</Clock>
        <TrayButton aria-label="Notifications" $after={0}><BellIcon /></TrayButton>
      </Tray>
    </Taskbar>
  );
}

export default function App() {
  return (
    <Screen>
      <GlobalStyle />
      <Desktop>
        <ServerManager />
        <NetworkConnections />
        <EthernetProperties />
      </Desktop>
      <WindowsTaskbar />
      <Watermark>
        <BrandMark />
        <WatermarkText>
          <BrandName>BKNET</BrandName>
          <BrandLine>Technology Academy</BrandLine>
        </WatermarkText>
      </Watermark>
    </Screen>
  );
}
